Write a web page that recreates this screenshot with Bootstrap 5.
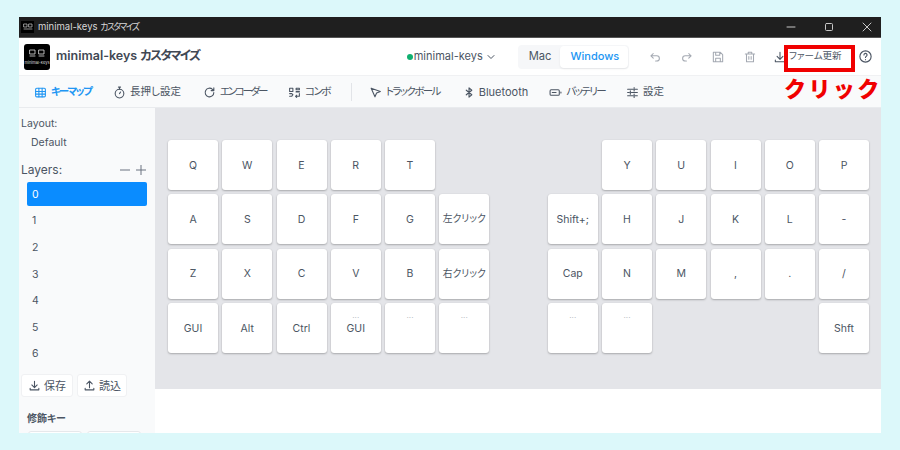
<!DOCTYPE html>
<html lang="ja">
<head>
  <meta charset="UTF-8" />
  <meta name="viewport" content="width=device-width, initial-scale=1" />
  <title>minimal-keys カスタマイズ</title>
  <link href="https://cdn.jsdelivr.net/npm/bootstrap@5.3.0/dist/css/bootstrap.min.css" rel="stylesheet" />
  <style>
    html, body { height: 450px; overflow: hidden; }
    body {
      background: #dcf8fa;
      padding: 17px 19px;
      font-family: Inter, "Noto Sans CJK JP", sans-serif;
      font-feature-settings: "palt";
      color: #4b5563;
    }
    svg { fill: none; stroke: currentColor; stroke-linecap: round; stroke-linejoin: round; flex: none; }
    .app-window { position: relative; height: 416px; background: #fff; overflow: hidden; }
    .title-bar { height: 21px; background: #1f1f1f; color: #d8d8d8; font-size: 9.5px; padding-left: 2px; border-bottom: 1px solid #555; }
    .title-logo { width: 13px; height: 12px; background: #000; color: #ccc; margin-right: 4px; }
    .title-kana { font-size: 8.8px; letter-spacing: -1.5px; }
    .win-btns { gap: 28px; padding-right: 9px; color: #c8c8c8; }
    .app-head { height: 38px; padding: 0 8px 0 5px; border-bottom: 1px solid #f0f1f3; }
    .app-logo { width: 26px; height: 26px; background: #000; color: #ddd; border-radius: 3px; font-size: 4px; line-height: 1; margin-right: 6px; padding-top: 5px; }
    .app-name { font-size: 12.5px; font-weight: 600; color: #414854; }
    .app-kana { letter-spacing: -1.7px; }
    .device-name { font-size: 11px; margin-right: 23px; }
    .status-dot { width: 6px; height: 6px; background: #10b070; border-radius: 50%; margin-right: 1px; }
    .os-switch { background: #f6f7f9; border-radius: 4px; height: 24px; padding: 1px; font-size: 11.2px; margin-right: 19px; }
    .os-item { padding: 0 9px 0 10px; line-height: 21px; }
    .os-item.active { background: #fff; color: #2196f3; font-weight: 500; font-size: 11px; border-radius: 4px; box-shadow: 0 1px 2px rgba(0,0,0,.08); }
    .head-tools { gap: 17.6px; color: #a4a9b2; margin-right: 16px; }
    .fw-btn { font-size: 9.5px; color: #4b5563; margin-right: 14px; gap: 2px; width: 71px; white-space: nowrap; }
    .tab-bar { height: 32px; background: #f9fafb; padding: 1px 0 0 15px; border-bottom: 1px solid #e9ebee; font-size: 10.5px; }
    .tab-item { margin-right: 22px; gap: 4px; white-space: nowrap; }
    .tab-item.active { color: #2196f3; font-weight: 600; }
    .tab-item.tab-close { margin-right: 21px; }
    .tab-item.tab-bt { margin-left: 2px; }
    .tab-kana { letter-spacing: -1.6px; }
    .tab-kana-long { letter-spacing: -2.25px; }
    .tab-latin { font-size: 11px; }
    .tab-sep { width: 1px; height: 18px; background: #e2e4e8; margin: 0 17px 0 -1px; }
    .side-panel { width: 136px; height: 325px; background: #f9fafb; padding: 8px 2px; font-size: 10.5px; overflow: hidden; flex: none; }
    .layout-val { padding: 3px 0 0 10px; height: 27px; }
    .layer-head { font-size: 12px; padding: 0 7px 0 0; height: 23px; }
    .layer-ops { gap: 6px; color: #6b7280; }
    .layer-item { height: 24px; line-height: 26px; margin: 0 6px 2.6px 6px; padding-left: 5px; border-radius: 2px; font-size: 10.5px; }
    .layer-item.active { background: #0a8cff; color: #fff; }
    .side-btns { gap: 4px; margin-top: 9px; }
    .side-btn { height: 23px; background: #fff; border: 1px solid #f0f1f3; border-radius: 3px; gap: 3px; padding: 0; color: #4b5563; font-size: 11px; }
    .side-btn.save-btn { width: 52px; }
    .side-btn.load-btn { width: 50px; }
    .mod-title { font-weight: 700; font-size: 10px; margin: 14px 0 0 6px; color: #4b5563; }
    .mod-chips { gap: 5px; margin: 5px 0 0 7px; }
    .mod-chip { width: 54px; height: 20px; background: #fff; border: 1px solid #e6e8eb; border-radius: 3px; }
    .main-area { flex: 1; height: 281px; background: #e4e5e9; padding: 32px 0 0 13px; }
    .key-grid { display: grid; grid-template-columns: repeat(13, 50px); grid-auto-rows: 50px; gap: 4.3px 4.25px; }
    .key-cap {
      background: #fff; border-radius: 3px; box-shadow: 0 1px 2px rgba(0,0,0,.25), 0 0 1px rgba(0,0,0,.12);
      font-size: 10.5px; padding-top: 1px; color: #4b5563; white-space: nowrap; position: relative;
    }
    .key-cap.cjk { font-size: 9.8px; }
    .key-top { position: absolute; top: 8px; left: 0; right: 0; text-align: center; font-size: 8px; line-height: 8px; color: #b5b9c0; }
    .key-low { padding-top: 1px; }
    .click-box { position: absolute; left: 765px; top: 28px; width: 71px; height: 27px; border: 4px solid #f00000; }
    .click-note { position: absolute; left: 765px; top: 57px; font-family: "Noto Sans CJK JP", sans-serif; font-feature-settings: normal; font-weight: 900; font-size: 22px; line-height: 26px; letter-spacing: 2.4px; color: #f00000; white-space: nowrap; }
  </style>
</head>
<body>
  <div class="app-window">
    <div class="title-bar d-flex align-items-center">
      <div class="title-logo d-flex align-items-center justify-content-center">
        <svg width="10" height="8" viewBox="0 0 10 8" stroke-width=".7"><path d="M1 1h3v3H1zM6 1h3v3H6zM1 6h8"/></svg>
      </div>
      <span>minimal-keys <span class="title-kana">カスタマイズ</span></span>
      <div class="win-btns d-flex align-items-center ms-auto">
        <svg width="10" height="10" viewBox="0 0 10 10" stroke-width="1"><path d="M1 5h8"/></svg>
        <svg width="10" height="10" viewBox="0 0 10 10" stroke-width="1"><rect x="1.500" y="1.500" width="7" height="7" rx="1"/></svg>
        <svg width="10" height="10" viewBox="0 0 10 10" stroke-width="1"><path d="M1 1l8 8M9 1l-8 8"/></svg>
      </div>
    </div>

    <div class="app-head d-flex align-items-center">
      <div class="app-logo d-flex flex-column align-items-center">
        <svg width="18" height="8" viewBox="0 0 18 8" stroke-width=".8"><path d="M2 1h5v4H2zM11 1h5v4h-5zM2 7h5M11 7h5"/></svg>
        <span class="mt-1">minimal-keys</span>
      </div>
      <span class="app-name">minimal-keys <span class="app-kana">カスタマイズ</span></span>
      <div class="device-name d-flex align-items-center ms-auto">
        <span class="status-dot"></span><span>minimal-keys</span>
        <svg class="ms-1" width="8" height="8" viewBox="0 0 8 8" stroke-width="1"><path d="M1 2.500l3 3 3-3"/></svg>
      </div>
      <div class="os-switch d-flex">
        <span class="os-item">Mac</span>
        <span class="os-item active">Windows</span>
      </div>
      <div class="head-tools d-flex align-items-center">
        <svg width="14" height="14" viewBox="0 0 24 24" stroke-width="1.800"><path d="M9 14L5 10l4-4M5 10h10a4.500 4.500 0 0 1 0 9h-2"/></svg>
        <svg width="14" height="14" viewBox="0 0 24 24" stroke-width="1.800"><path d="M15 14l4-4-4-4M19 10H9a4.500 4.500 0 0 0 0 9h2"/></svg>
        <svg width="14" height="14" viewBox="0 0 24 24" stroke-width="1.800"><path d="M6 4h10l4 4v12H4V4zM8 4v5h7V4M8 20v-6h8v6"/></svg>
        <svg width="14" height="14" viewBox="0 0 24 24" stroke-width="1.800"><path d="M4 7h16M9 7V4h6v3M6 7v13h12V7M10 11v5M14 11v5"/></svg>
      </div>
      <div class="fw-btn d-flex align-items-center">
        <svg width="14" height="14" viewBox="0 0 24 24" stroke-width="1.800"><path d="M12 4v11M7 11l5 5 5-5M4 17v3h16v-3"/></svg>
        <span>ファーム更新</span>
      </div>
      <svg width="15" height="15" viewBox="0 0 24 24" stroke-width="1.800"><circle cx="12" cy="12" r="9"/><path d="M9.500 9.500a2.500 2.500 0 1 1 3.500 2.300c-.7.4-1 .9-1 1.700M12 17v.01"/></svg>
    </div>

    <div class="tab-bar d-flex align-items-center">
      <div class="tab-item active d-flex align-items-center">
        <svg width="13" height="13" viewBox="0 0 24 24" stroke-width="2"><rect x="3" y="4" width="18" height="16" rx="2"/><path d="M3 10h18M3 15h18M9 4v16M15 4v16"/></svg>
        <span class="tab-kana">キーマップ</span>
      </div>
      <div class="tab-item d-flex align-items-center">
        <svg width="13" height="13" viewBox="0 0 24 24" stroke-width="2"><circle cx="12" cy="14" r="8"/><path d="M12 14l2-3M10 2h4M12 2v4"/></svg>
        <span>長押し設定</span>
      </div>
      <div class="tab-item d-flex align-items-center">
        <svg width="13" height="13" viewBox="0 0 24 24" stroke-width="2"><path d="M20 12a8 8 0 1 1-2.500-5.800L20 8.500M20 3.500v5h-5"/></svg>
        <span class="tab-kana-long">エンコーダー</span>
      </div>
      <div class="tab-item d-flex align-items-center">
        <svg width="13" height="13" viewBox="0 0 24 24" stroke-width="2"><path d="M3 4h6v6H3zM15 4h6v3h-6zM15 10h6v1h-6zM3 14h4l2 2-2 3H3M21 14v5h-7M16 17l-2 2 2 2"/></svg>
        <span class="tab-kana">コンボ</span>
      </div>
      <div class="tab-sep"></div>
      <div class="tab-item d-flex align-items-center">
        <svg width="13" height="13" viewBox="0 0 24 24" stroke-width="2"><path d="M4 4l17 6-7 3-3 7z"/></svg>
        <span class="tab-kana">トラックボール</span>
      </div>
      <div class="tab-item tab-bt tab-close d-flex align-items-center">
        <svg width="11" height="13" viewBox="0 0 24 24" stroke-width="2.500"><path d="M5 7l12 10-6 5V2l6 5L5 17"/></svg>
        <span class="tab-latin">Bluetooth</span>
      </div>
      <div class="tab-item tab-close d-flex align-items-center">
        <svg width="13" height="13" viewBox="0 0 24 24" stroke-width="2"><rect x="2" y="7" width="17" height="10" rx="2"/><path d="M6 12h7M22 11v2"/></svg>
        <span class="tab-kana">バッテリー</span>
      </div>
      <div class="tab-item d-flex align-items-center">
        <svg width="13" height="13" viewBox="0 0 24 24" stroke-width="2"><path d="M3 6h10M17 6h4M15 3v6M3 12h3M10 12h11M8 9v6M3 18h10M17 18h4M15 15v6"/></svg>
        <span>設定</span>
      </div>
    </div>

    <div class="d-flex">
      <div class="side-panel">
        <div>Layout:</div>
        <div class="layout-val">Default</div>
        <div class="layer-head d-flex align-items-center justify-content-between">
          <span>Layers:</span>
          <div class="layer-ops d-flex">
            <svg width="10" height="10" viewBox="0 0 10 10" stroke-width="1"><path d="M0 5h10"/></svg>
            <svg width="10" height="10" viewBox="0 0 10 10" stroke-width="1"><path d="M0 5h10M5 0v10"/></svg>
          </div>
        </div>
        <div class="layer-item active">0</div>
        <div class="layer-item">1</div>
        <div class="layer-item">2</div>
        <div class="layer-item">3</div>
        <div class="layer-item">4</div>
        <div class="layer-item">5</div>
        <div class="layer-item">6</div>
        <div class="side-btns d-flex">
          <button type="button" class="side-btn save-btn btn d-flex align-items-center justify-content-center">
            <svg width="13" height="13" viewBox="0 0 24 24" stroke-width="2"><path d="M12 4v11M7 11l5 5 5-5M4 17v3h16v-3"/></svg>保存
          </button>
          <button type="button" class="side-btn load-btn btn d-flex align-items-center justify-content-center">
            <svg width="13" height="13" viewBox="0 0 24 24" stroke-width="2"><path d="M12 16V5M7 9l5-5 5 5M4 17v3h16v-3"/></svg>読込
          </button>
        </div>
        <div class="mod-title">修飾キー</div>
        <div class="mod-chips d-flex">
          <div class="mod-chip"></div>
          <div class="mod-chip"></div>
        </div>
      </div>
      <div class="main-area">
        <div class="key-grid" id="keyGrid"></div>
      </div>
    </div>

    <div class="click-box"></div>
    <div class="click-note">クリック</div>
  </div>

  <script src="https://cdn.jsdelivr.net/npm/bootstrap@5.3.0/dist/js/bootstrap.bundle.min.js"></script>
  <script>
    // null = empty cell, "…" = transparent key, "…GUI" = transparent key with a hold label
    const rows = [
      ['Q','W','E','R','T',null,null,null,'Y','U','I','O','P'],
      ['A','S','D','F','G','左クリック',null,'Shift+;','H','J','K','L','-'],
      ['Z','X','C','V','B','右クリック',null,'Cap','N','M',',','.','/'],
      ['GUI','Alt','Ctrl','…GUI','…','…',null,'…','…',null,null,null,'Shft']
    ];
    const grid = document.getElementById('keyGrid');
    rows.flat().forEach(k => {
      const el = document.createElement('div');
      if (k === null) { grid.appendChild(el); return; }
      el.className = 'key-cap d-flex align-items-center justify-content-center';
      if (k.startsWith('…')) {
        el.innerHTML = '<span class="key-top">...</span><span class="key-low">' + k.slice(1) + '</span>';
      } else {
        if (k.includes('クリック')) el.classList.add('cjk');
        el.textContent = k;
      }
      grid.appendChild(el);
    });
  </script>
</body>
</html>
